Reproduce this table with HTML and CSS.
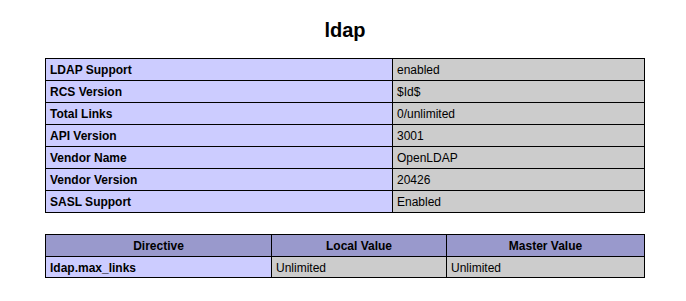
FILE: index.html
```html
<!DOCTYPE html>
<html>
<head>
<meta charset="utf-8">
<title>ldap</title>
<link rel="stylesheet" href="styles.css">
</head>
<body>
<div class="center">
<h2>ldap</h2>
<table class="info">
<tr><td class="e">LDAP Support</td><td class="v">enabled</td></tr>
<tr><td class="e">RCS Version</td><td class="v">$Id$</td></tr>
<tr><td class="e">Total Links</td><td class="v">0/unlimited</td></tr>
<tr><td class="e">API Version</td><td class="v">3001</td></tr>
<tr><td class="e">Vendor Name</td><td class="v">OpenLDAP</td></tr>
<tr><td class="e">Vendor Version</td><td class="v">20426</td></tr>
<tr><td class="e">SASL Support</td><td class="v">Enabled</td></tr>
</table>
<table class="directives">
<tr class="h"><th class="c1">Directive</th><th class="c2">Local Value</th><th class="c3">Master Value</th></tr>
<tr class="last"><td class="e">ldap.max_links</td><td class="v">Unlimited</td><td class="v">Unlimited</td></tr>
</table>
</div>
</body>
</html>
```
FILE: styles.css
```css
body {
  margin: 8px;
  background: #ffffff;
  color: #000000;
  font-family: "Liberation Sans", Arial, sans-serif;
}
.center {
  text-align: center;
  padding-left: 4px;
}
h2 {
  font-size: 20px;
  font-weight: bold;
  margin: 11px 0 16px;
  line-height: 23px;
}
table {
  border-collapse: collapse;
  width: 600px;
  margin: 0 auto;
  text-align: left;
}
.directives {
  margin-top: 21px;
}
td, th {
  border: 1px solid #000000;
  font-size: 12px;
  line-height: 15px;
  padding: 4px 4px 2px;
  vertical-align: baseline;
}
.last td {
  line-height: 14px;
}
.info .e {
  width: 338px;
}
.e {
  background-color: #ccccff;
  font-weight: bold;
}
.v {
  background-color: #cccccc;
}
.h th {
  background-color: #9999cc;
  font-weight: bold;
  text-align: center;
}
.c1 { width: 217px; }
.c2 { width: 166px; }
```
